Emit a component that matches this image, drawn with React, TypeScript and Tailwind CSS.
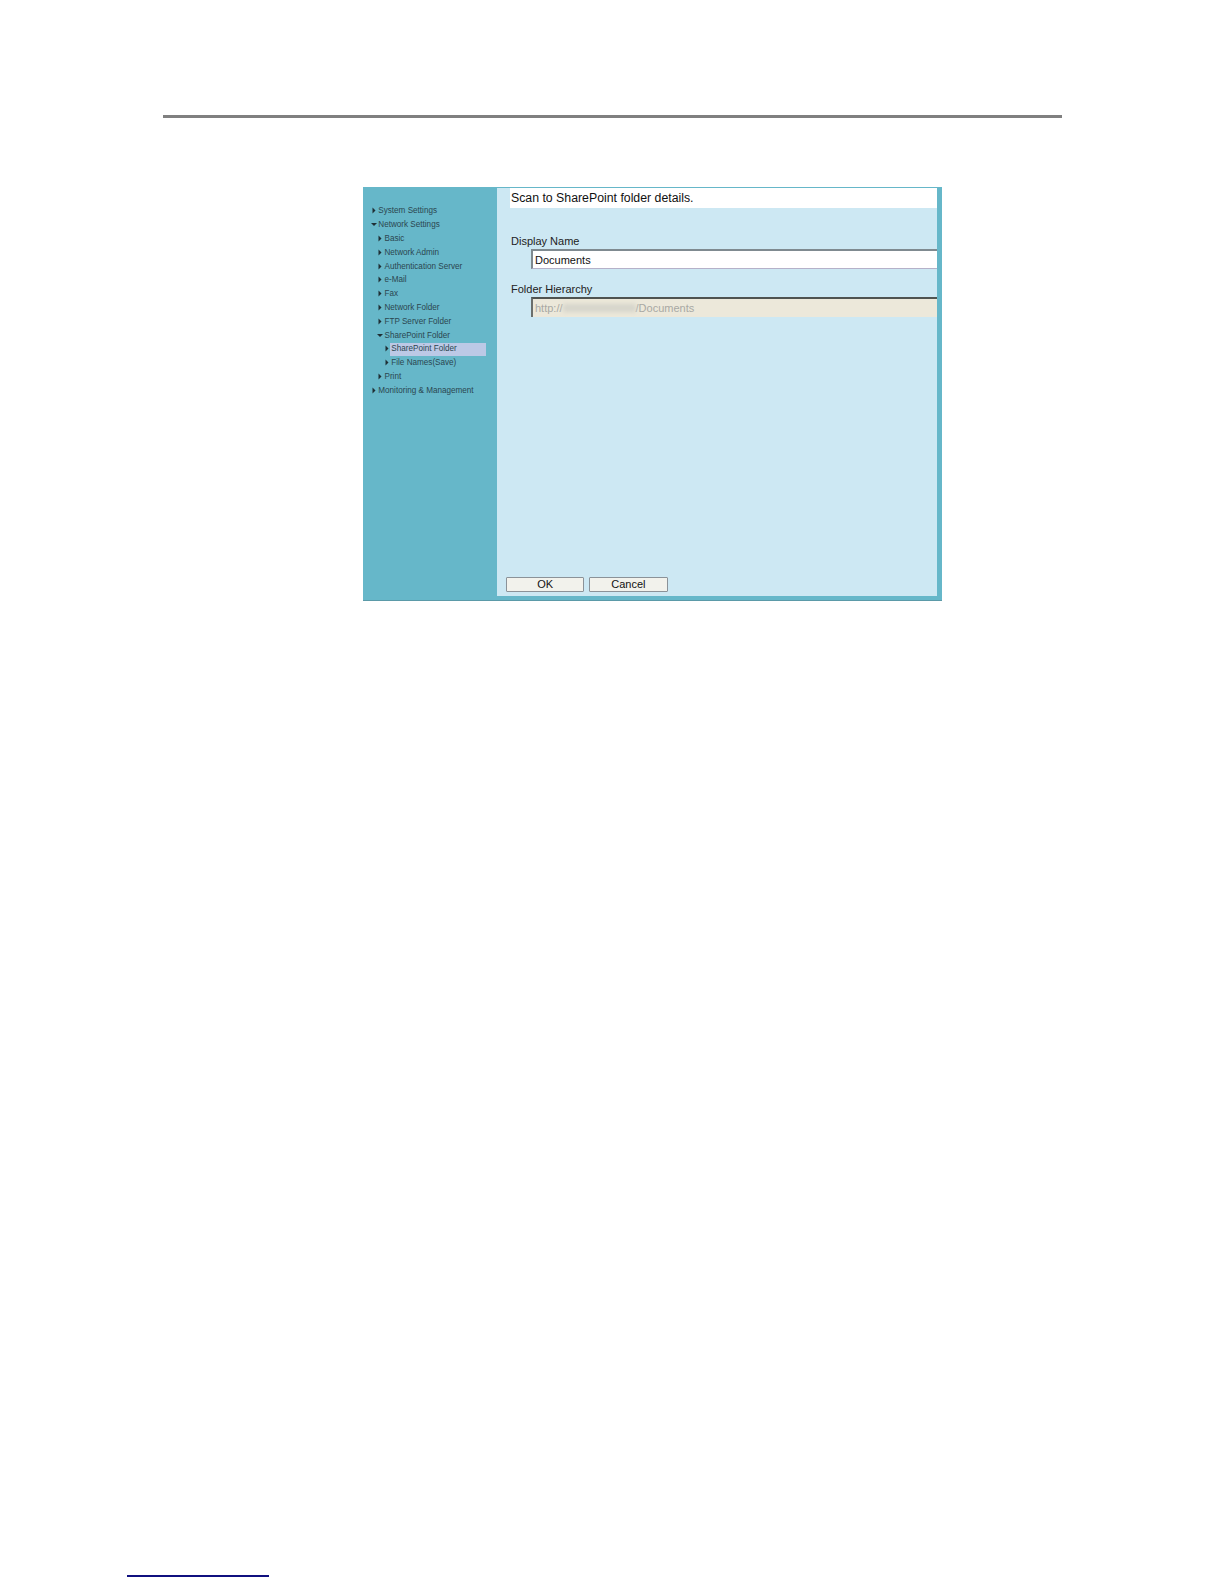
import React from "react";

type NavItem = {
  label: string;
  level: 0 | 1 | 2;
  open?: boolean;
  selected?: boolean;
};

const NAV_ITEMS: NavItem[] = [
  { label: "System Settings", level: 0 },
  { label: "Network Settings", level: 0, open: true },
  { label: "Basic", level: 1 },
  { label: "Network Admin", level: 1 },
  { label: "Authentication Server", level: 1 },
  { label: "e-Mail", level: 1 },
  { label: "Fax", level: 1 },
  { label: "Network Folder", level: 1 },
  { label: "FTP Server Folder", level: 1 },
  { label: "SharePoint Folder", level: 1, open: true },
  { label: "SharePoint Folder", level: 2, selected: true },
  { label: "File Names(Save)", level: 2 },
  { label: "Print", level: 1 },
  { label: "Monitoring & Management", level: 0 },
];

const Arrow: React.FC<{ open?: boolean }> = ({ open }) => (
  <svg width="6" height="7" viewBox="0 0 6 7" className="mb-[1px] shrink-0">
    {open ? (
      <polygon points="0,2 6,2 3,5" fill="#1f2f35" />
    ) : (
      <polygon points="1.5,0.5 4.5,3.5 1.5,6.5" fill="#1f2f35" />
    )}
  </svg>
);

const NavRow: React.FC<{ item: NavItem }> = ({ item }) => {
  const indent =
    item.level === 0 ? "pl-[7.5px]" : item.level === 1 ? "pl-[13.7px]" : "pl-[20.5px]";
  return (
    <div className={`flex h-[13.8px] items-center ${indent}`}>
      <Arrow open={item.open} />
      <span
        className={`ml-[0.5px] flex h-[13.8px] items-center whitespace-nowrap pl-[1.3px] text-[8.15px] text-[#2b4650] ${
          item.selected ? "w-[96px] bg-[#bcc9e6]" : ""
        }`}
      >
        {item.label}
      </span>
    </div>
  );
};

const App: React.FC = () => {
  return (
    <div className="h-[1584px] w-[1224px] overflow-hidden bg-white pt-[115px] font-['Liberation_Sans',Arial,sans-serif]">
      {/* page header rule */}
      <div className="ml-[163px] h-[3px] w-[899px] bg-[#808080]" />

      {/* settings window capture */}
      <div className="ml-[363px] mt-[69px] flex h-[414px] w-[579px] border-b border-[#5b9aa8] bg-[#66b7c9]">
        <div className="w-[134px] shrink-0 pt-[17.6px]">
          {NAV_ITEMS.map((item, i) => (
            <NavRow key={i} item={item} />
          ))}
        </div>

        <div className="mb-[4px] mt-[1px] flex w-[440px] flex-col bg-[#cde8f3]">
          <div className="ml-[13px] flex h-[20px] items-center bg-white pl-[1px] text-[12.3px] text-[#111]">
            Scan to SharePoint folder details.
          </div>

          <div className="ml-[14px] mt-[26px] text-[11px] leading-[14px] text-[#222]">
            Display Name
          </div>
          <div className="ml-[34px] mt-[1.3px] flex h-[20px] items-center border-t-2 border-l-2 border-b border-t-[#7f8a90] border-l-[#7f8a90] border-b-[#b5b1c9] bg-white pl-[2px] text-[11px] text-[#111]">
            Documents
          </div>

          <div className="ml-[14px] mt-[12.8px] text-[11px] leading-[14px] text-[#222]">
            Folder Hierarchy
          </div>
          <div className="ml-[34px] mt-[1px] flex h-[20px] items-center border-t-2 border-l-2 border-t-[#4f5350] border-l-[#6b6f6c] bg-[#ece8da] pl-[2px] text-[11px] text-[#a8a8a4]">
            <span>http://</span>
            <span className="h-[8px] w-[73px] bg-[#d6d5cb] blur-[2px]" />
            <span>/Documents</span>
          </div>

          <div className="mb-[4px] ml-[9px] mt-auto flex gap-[5px]">
            <button className="h-[15.4px] w-[78.3px] rounded-[1px] border border-[#8b9298] bg-[#f2f2ec] text-[11px] leading-[13px] text-[#111]">
              OK
            </button>
            <button className="h-[15.4px] w-[78.3px] rounded-[1px] border border-[#8b9298] bg-[#f2f2ec] text-[11px] leading-[13px] text-[#111]">
              Cancel
            </button>
          </div>
        </div>
      </div>

      {/* footer link underline */}
      <div className="ml-[127px] mt-[974px] h-[1.5px] w-[142px] bg-[#10107f]" />
    </div>
  );
};

export default App;
